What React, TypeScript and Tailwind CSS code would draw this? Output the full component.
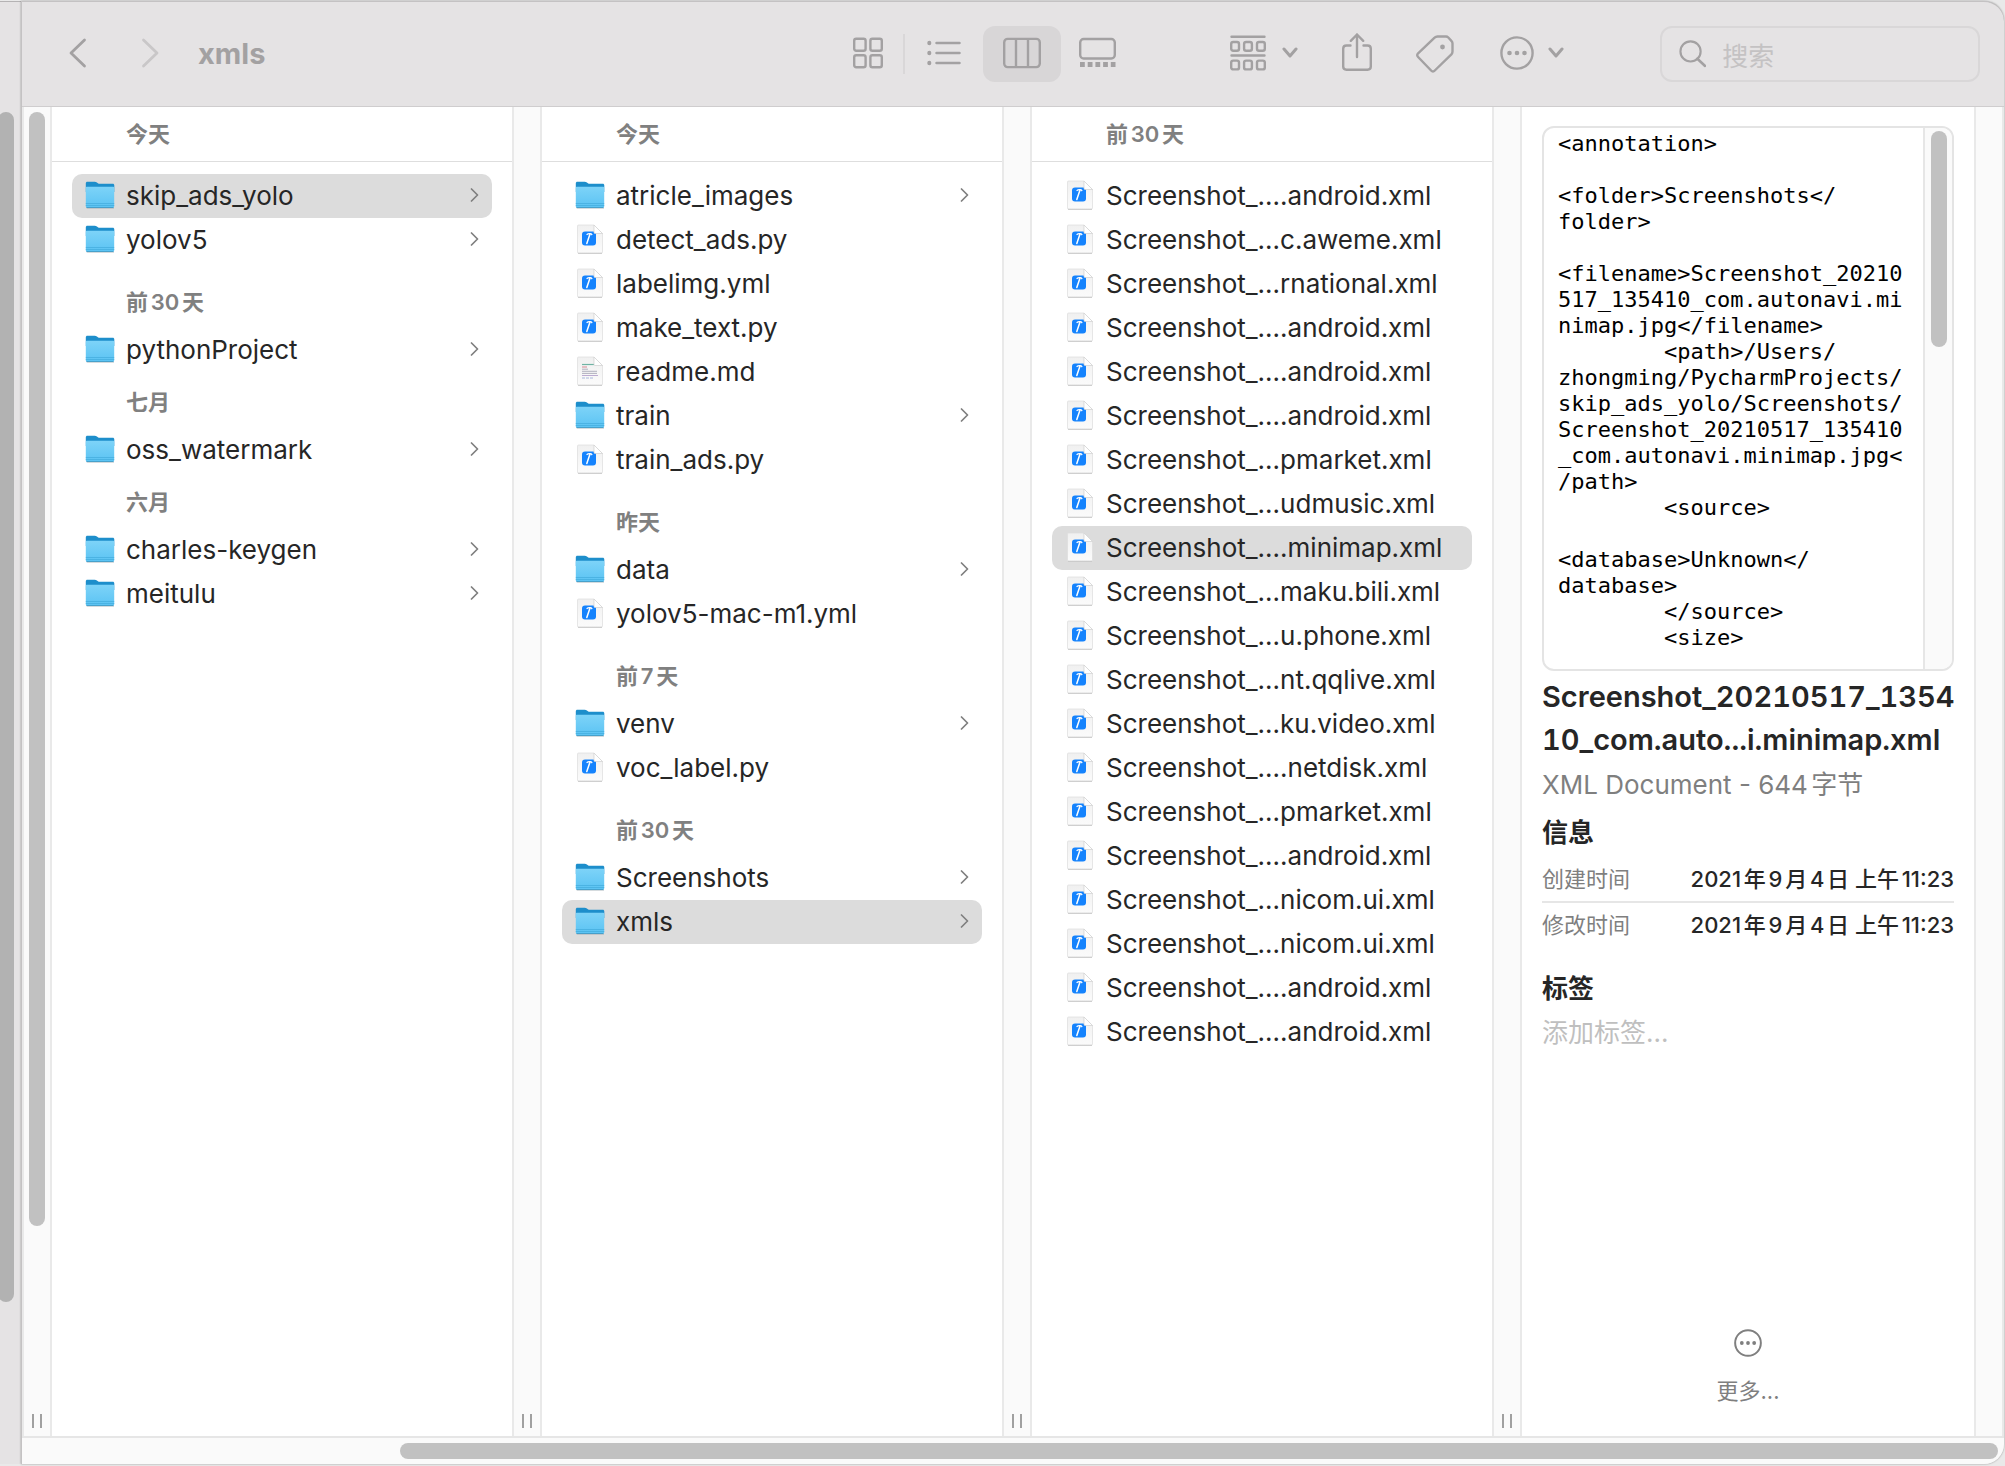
import React, { useState } from "react";

type Kind = "folder" | "code" | "text";

interface Entry {
  name: string;
  kind: Kind;
}

interface Group {
  title: string;
  entries: Entry[];
}

const folder = (name: string): Entry => ({ name, kind: "folder" });
const code = (name: string): Entry => ({ name, kind: "code" });

const PROJECTS: Group[] = [
  { title: "今天", entries: [folder("skip_ads_yolo"), folder("yolov5")] },
  { title: "前30天", entries: [folder("pythonProject")] },
  { title: "七月", entries: [folder("oss_watermark")] },
  { title: "六月", entries: [folder("charles-keygen"), folder("meitulu")] },
];

const FILES: Group[] = [
  {
    title: "今天",
    entries: [
      folder("atricle_images"),
      code("detect_ads.py"),
      code("labelimg.yml"),
      code("make_text.py"),
      { name: "readme.md", kind: "text" },
      folder("train"),
      code("train_ads.py"),
    ],
  },
  { title: "昨天", entries: [folder("data"), code("yolov5-mac-m1.yml")] },
  { title: "前7天", entries: [folder("venv"), code("voc_label.py")] },
  { title: "前30天", entries: [folder("Screenshots"), folder("xmls")] },
];

const XMLS: Group[] = [
  {
    title: "前30天",
    entries: [
      "....android.xml",
      "...c.aweme.xml",
      "...rnational.xml",
      "....android.xml",
      "....android.xml",
      "....android.xml",
      "...pmarket.xml",
      "...udmusic.xml",
      "....minimap.xml",
      "...maku.bili.xml",
      "...u.phone.xml",
      "...nt.qqlive.xml",
      "...ku.video.xml",
      "....netdisk.xml",
      "...pmarket.xml",
      "....android.xml",
      "...nicom.ui.xml",
      "...nicom.ui.xml",
      "....android.xml",
      "....android.xml",
    ].map(end => code("Screenshot_" + end)),
  },
];

const PREVIEW = `<annotation>

<folder>Screenshots</
folder>

<filename>Screenshot_20210
517_135410_com.autonavi.mi
nimap.jpg</filename>
        <path>/Users/
zhongming/PycharmProjects/
skip_ads_yolo/Screenshots/
Screenshot_20210517_135410
_com.autonavi.minimap.jpg<
/path>
        <source>

<database>Unknown</
database>
        </source>
        <size>`;

function FolderIcon() {
  return (
    <svg width="30" height="30" viewBox="0 0 30 30" aria-hidden="true">
      <defs>
        <linearGradient id="folderFront" x1="0" y1="0" x2="0" y2="1">
          <stop offset="0" stopColor="#7dd3f8" />
          <stop offset="1" stopColor="#5bc3f3" />
        </linearGradient>
      </defs>
      <path d="M1 27.500h28v1.200H2z" fill="#9aa7ae" opacity=".55" />
      <path d="M.8 3.400c0-1 .6-1.600 1.600-1.600h7.200c1 0 1.600.2 2.300.8l1 .7c.6.4 1 .5 1.800.5h13c1 0 1.600.6 1.600 1.600V12H.8z" fill="#1d8ecb" />
      <path d="M.8 8.200c0-.9.5-1.400 1.400-1.400h25.600c.9 0 1.400.5 1.400 1.400v18c0 .9-.6 1.500-1.500 1.500H2.300c-.9 0-1.500-.6-1.500-1.500z" fill="url(#folderFront)" />
      <path d="M.8 23.500h28.400M.8 25.500h28.400" stroke="#45aede" strokeWidth=".8" />
      <path d="M1.500 27.500h27" stroke="#3a95c2" strokeWidth=".8" />
    </svg>
  );
}

function PageShape({ children }: { children: React.ReactNode }) {
  return (
    <svg width="30" height="30" viewBox="0 0 30 30" aria-hidden="true">
      <defs>
        <linearGradient id="page" x1="0" y1="0" x2="0" y2="1">
          <stop offset="0" stopColor="#f0f0f0" />
          <stop offset="1" stopColor="#fbfbfb" />
        </linearGradient>
      </defs>
      <path d="M3.500 1h15.500l8.500 8.500V28c0 .8-.6 1.300-1.300 1.300H3.800c-.8 0-1.300-.5-1.300-1.300V2c0-.6.4-1 1-1z" fill="url(#page)" stroke="#dcdcdc" strokeWidth=".7" />
      <path d="M3 29.300h24" stroke="#c4c4c4" strokeWidth=".9" />
      {children}
      <path d="M19 1l8.500 8.500H20c-.6 0-1-.4-1-1z" fill="#fff" stroke="#d0d0d0" strokeWidth=".7" />
    </svg>
  );
}

function CodeIcon() {
  return (
    <PageShape>
      <rect x="7" y="7.500" width="14" height="14" rx="3" fill="#1583fd" />
      <path d="M15 10L11.800 19.500" stroke="#fff" strokeWidth="1.500" strokeLinecap="round" />
      <path d="M11.600 10.800c1.200-1 3-1.300 4.600-.9l1 1.100" stroke="#fff" strokeWidth="1.200" fill="none" />
    </PageShape>
  );
}

function TextIcon() {
  return (
    <PageShape>
      <path d="M7 8.500h12" stroke="#6fb3a4" strokeWidth="1.200" />
      <path d="M7 11h5" stroke="#d9909c" strokeWidth="1.100" />
      <path d="M7 13.200h6M7 15.300h15M7 17.400h15" stroke="#a9a9b8" strokeWidth=".9" />
      <path d="M7 19.500h16" stroke="#b4a3cc" strokeWidth=".9" />
      <path d="M7 22h12" stroke="#9fb0d8" strokeWidth=".9" strokeDasharray="3 1" />
    </PageShape>
  );
}

const ICONS: Record<Kind, React.ReactNode> = {
  folder: <FolderIcon />,
  code: <CodeIcon />,
  text: <TextIcon />,
};

function EllipsisCircle({ size, stroke }: { size: number; stroke: number }) {
  return (
    <svg width={size} height={size} viewBox="0 0 34 34" fill="none" stroke="currentColor" strokeWidth={stroke} aria-hidden="true">
      <circle cx="17" cy="17" r="15.600" />
      <g fill="currentColor" stroke="none">
        <circle cx="9.500" cy="17" r="2.300" />
        <circle cx="17" cy="17" r="2.300" />
        <circle cx="24.500" cy="17" r="2.300" />
      </g>
    </svg>
  );
}

function ChevronDown() {
  return (
    <svg width="16" height="12" viewBox="0 0 16 12" fill="none" stroke="currentColor" strokeWidth="3" strokeLinecap="round" strokeLinejoin="round" aria-hidden="true">
      <path d="M2 2l6 7 6-7" />
    </svg>
  );
}

function Toolbar() {
  const [query, setQuery] = useState("");

  return (
    <header className="flex h-[105px] shrink-0 items-center border-b border-[#cfcdce] pl-10 pr-6 text-[#a3a1a2]">
      <button aria-label="后退" className="flex h-14 w-8 items-center justify-center pb-0.5">
        <svg width="18" height="30" viewBox="0 0 18 30" fill="none" stroke="currentColor" strokeWidth="2.800" strokeLinecap="round" strokeLinejoin="round">
          <path d="M15.500 2L2 15l13.500 13" />
        </svg>
      </button>
      <button aria-label="前进" className="ml-10 flex h-14 w-8 items-center justify-center pb-0.5 text-[#c9c7c8]">
        <svg width="18" height="30" viewBox="0 0 18 30" fill="none" stroke="currentColor" strokeWidth="2.800" strokeLinecap="round" strokeLinejoin="round">
          <path d="M2.500 2L16 15 2.500 28" />
        </svg>
      </button>
      <h1 className="ml-8 pb-0.5 text-[29px] font-bold leading-none">xmls</h1>

      <div className="ml-auto flex items-center">
        <button aria-label="图标" className="flex h-14 w-[70px] items-center justify-center pb-0.5">
          <svg width="30" height="32" viewBox="0 0 30 32" fill="none" stroke="currentColor" strokeWidth="2.400">
            <rect x="1.200" y="1.700" width="11.400" height="12" rx="2" />
            <rect x="17.400" y="1.700" width="11.400" height="12" rx="2" />
            <rect x="1.200" y="18.200" width="11.400" height="12" rx="2" />
            <rect x="17.400" y="18.200" width="11.400" height="12" rx="2" />
          </svg>
        </button>
        <span className="h-10 w-0.5 bg-[#d9d7d8]" />
        <button aria-label="列表" className="flex h-14 w-[78px] items-center justify-center pb-0.5">
          <svg width="34" height="26" viewBox="0 0 34 26" fill="none" stroke="currentColor" strokeWidth="2.500" strokeLinecap="round">
            <path d="M9.500 3h23M9.500 13h23M9.500 23h23" />
            <path d="M2.300 2.800v.4M2.300 12.800v.4M2.300 22.800v.4" strokeWidth="4" />
          </svg>
        </button>
        <button aria-label="分栏" aria-pressed="true" className="flex h-14 w-[78px] items-center justify-center rounded-xl bg-[#d8d6d7] pb-0.5">
          <svg width="38" height="32" viewBox="0 0 38 32" fill="none" stroke="currentColor" strokeWidth="2.400">
            <rect x="1.200" y="1.900" width="35.600" height="28.200" rx="3.500" />
            <path d="M13 2v28M25 2v28" />
          </svg>
        </button>
        <button aria-label="画廊" className="flex h-14 w-[72px] items-center justify-center pb-0.5">
          <svg width="37" height="32" viewBox="0 0 37 32" fill="none" stroke="currentColor" strokeWidth="2.400">
            <rect x="1.200" y="2" width="34.600" height="19.500" rx="3.500" />
            <path d="M1 27.500h35.500" strokeWidth="5" strokeDasharray="4.800 2.900" />
          </svg>
        </button>
      </div>

      <button aria-label="分组" className="ml-[97px] flex h-14 items-center gap-4 pb-0.5">
        <svg width="36" height="36" viewBox="0 0 36 36" fill="none" stroke="currentColor" strokeWidth="2.400" strokeLinecap="round">
          <path d="M1.500 1.800h33M1.500 20.500h33" />
          <rect x="1.200" y="7" width="7.800" height="8.800" rx="2" />
          <rect x="14.100" y="7" width="7.800" height="8.800" rx="2" />
          <rect x="27" y="7" width="7.800" height="8.800" rx="2" />
          <rect x="1.200" y="25.600" width="7.800" height="8.800" rx="2" />
          <rect x="14.100" y="25.600" width="7.800" height="8.800" rx="2" />
          <rect x="27" y="25.600" width="7.800" height="8.800" rx="2" />
        </svg>
        <ChevronDown />
      </button>
      <button aria-label="共享" className="ml-11 flex h-14 items-center pb-1">
        <svg width="30" height="38" viewBox="0 0 30 38" fill="none" stroke="currentColor" strokeWidth="2.400" strokeLinecap="round" strokeLinejoin="round">
          <path d="M8.500 12.500H4.500C2.500 12.500 1.200 13.700 1.200 15.700v17.800c0 2 1.300 3.200 3.300 3.200h21c2 0 3.300-1.200 3.300-3.200V15.700c0-2-1.300-3.200-3.300-3.200h-4" />
          <path d="M15 24V1.500M8.800 7.800L15 1.500l6.200 6.300" />
        </svg>
      </button>
      <button aria-label="标签" className="ml-11 flex h-14 items-center">
        <svg width="38" height="38" viewBox="0 0 38 38" fill="none" stroke="currentColor" strokeWidth="2.400" strokeLinejoin="round">
          <path d="M21.500 1.500h8.500c1 0 1.600.3 2.300 1l3.300 3.600c.7.700.9 1.300.9 2.300v8.200c0 1.100-.3 1.900-1.100 2.800L18.800 35.500c-1.200 1.300-2.500 1.300-3.700 0L2.100 22c-1.200-1.300-1.200-2.400 0-3.700L18.600 2.700c.9-.9 1.700-1.200 2.900-1.200z" />
          <circle cx="26.500" cy="12" r="2.400" fill="currentColor" stroke="none" />
        </svg>
      </button>
      <button aria-label="操作" className="ml-[46px] flex h-14 items-center gap-[14px] pb-0.5">
        <EllipsisCircle size={34} stroke={2.4} />
        <ChevronDown />
      </button>

      <label className="ml-24 flex h-14 w-80 shrink-0 items-center rounded-xl border-2 border-[#d9d7d8] pl-[17px]">
        <svg width="32" height="32" viewBox="0 0 32 32" fill="none" stroke="currentColor" strokeWidth="2.500" strokeLinecap="round" aria-hidden="true">
          <circle cx="13.500" cy="13" r="11.800" />
          <path d="M21.500 21.500L30.500 30" strokeWidth="3" />
        </svg>
        <input
          type="text"
          aria-label="搜索"
          placeholder="搜索"
          value={query}
          onChange={e => setQuery(e.target.value)}
          className="ml-4 mt-1 w-full min-w-0 bg-transparent text-[26px] text-gray-700 outline-none placeholder:text-[#c4c2c3]"
        />
      </label>
    </header>
  );
}

function Gutter({ thumb = false, grip = true }: { thumb?: boolean; grip?: boolean }) {
  return (
    <div className="flex w-[30px] shrink-0 flex-col items-center border-x-2 border-[#e9e9e9] bg-[#fafafa] pb-2 pt-[5px]">
      {thumb && <div className="h-11/13 w-4 rounded-full bg-[#c1c1c1]" />}
      {grip && <div className="mt-auto h-[14px] w-[10px] border-x-2 border-[#a0a0a0]" />}
    </div>
  );
}

interface ColumnProps {
  groups: Group[];
  initial: number;
}

function Column({ groups, initial }: ColumnProps) {
  const [selected, setSelected] = useState(initial);
  let index = -1;

  return (
    <section className="min-w-0 flex-1 bg-white">
      {groups.map((group, g) => (
        <div key={g}>
          <h2
            className={`flex items-center pl-[74px] text-[22px] font-semibold text-[#808080] [text-autospace:normal] ${
              g === 0 ? "mb-3 h-[55px] border-b border-[#dedede]" : "h-[50px] pb-0.5"
            }`}
          >
            <span>{group.title}</span>
          </h2>
          <ul className={`px-5 ${group.entries.length > 1 ? "pb-4" : "pb-1.5"}`}>
            {group.entries.map((entry, i) => {
              index += 1;
              const row = index;
              return (
                <li key={i}>
                  <button
                    onClick={() => setSelected(row)}
                    className={`flex h-11 w-full items-center rounded-[10px] px-[13px] pb-0.5 text-left text-[26px] text-[#262626] ${
                      selected === row ? "bg-[#dcdcdc]" : ""
                    }`}
                  >
                    {ICONS[entry.kind]}
                    <span className="ml-[11px] flex-1 whitespace-nowrap">{entry.name}</span>
                    {entry.kind === "folder" && (
                      <svg width="9" height="14" viewBox="0 0 9 14" fill="none" stroke="#7f7f7f" strokeWidth="1.700" strokeLinecap="round" strokeLinejoin="round" aria-hidden="true">
                        <path d="M1.500 1l6 6-6 6" />
                      </svg>
                    )}
                  </button>
                </li>
              );
            })}
          </ul>
        </div>
      ))}
    </section>
  );
}

function Preview() {
  return (
    <aside className="flex w-[452px] shrink-0 flex-col bg-white px-5 pt-[19px]">
      <div className="flex h-[545px] shrink-0 overflow-hidden rounded-xl border-2 border-[#e4e4e4]">
        <pre className="flex-1 pl-[14px] pt-[3px] font-['DejaVu_Sans_Mono',monospace] text-[22px] leading-[26px] text-black">{PREVIEW}</pre>
        <div className="w-[29px] border-l-2 border-[#e6e6e6] bg-[#fafafa] pl-[6px] pt-[3px]">
          <div className="h-[216px] w-4 rounded-full bg-[#c1c1c1]" />
        </div>
      </div>
      <h2 className="mt-1 whitespace-nowrap text-[29px] font-semibold tabular-nums leading-[43px] text-[#262626]">
        Screenshot_20210517_1354
        <br />
        10_com.auto...i.minimap.xml
      </h2>
      <p className="text-[26px] leading-[48px] text-[#7f7f7f] [text-autospace:normal]">XML Document - 644字节</p>
      <h3 className="text-[26px] font-bold leading-[48px] text-[#262626]">信息</h3>
      <dl className="text-[22px] leading-[44px]">
        <div className="flex justify-between border-b-2 border-[#e6e6e6]">
          <dt className="text-[#7f7f7f]">创建时间</dt>
          <dd className="font-medium text-[#262626] [text-autospace:normal]">2021年9月4日 上午11:23</dd>
        </div>
        <div className="flex justify-between">
          <dt className="text-[#7f7f7f]">修改时间</dt>
          <dd className="font-medium text-[#262626] [text-autospace:normal]">2021年9月4日 上午11:23</dd>
        </div>
      </dl>
      <h3 className="mt-5 text-[26px] font-bold leading-[44px] text-[#262626]">标签</h3>
      <button className="text-left text-[26px] leading-[44px] text-[#bfbfbf]">添加标签...</button>
      <button className="mb-7 mt-auto flex flex-col items-center gap-[18px] self-center text-[22px] text-[#7f7f7f]">
        <EllipsisCircle size={28} stroke={2.4} />
        更多...
      </button>
    </aside>
  );
}

export default function App() {
  return (
    <div className="flex h-screen overflow-hidden bg-[#e9e9e9] pb-0.5 pt-px font-[Inter,'Noto_Sans_CJK_SC',sans-serif]">
      <div className="flex w-[21px] shrink-0 border-t border-[#b5b3b4] bg-[#e5e3e4] pt-[110px]">
        <div className="-ml-0.5 h-[88%] w-4 rounded-full bg-[#b2b2b2]" />
      </div>
      <main className="mr-px flex min-w-0 flex-1 flex-col overflow-hidden rounded-r-[20px] border-l border-t border-[#c4c2c3] bg-[#e5e3e4] shadow-[0_0_2px_rgba(0,0,0,0.4)]">
        <Toolbar />
        <div className="flex min-h-0 flex-1">
          <Gutter thumb />
          <Column groups={PROJECTS} initial={0} />
          <Gutter />
          <Column groups={FILES} initial={12} />
          <Gutter />
          <Column groups={XMLS} initial={8} />
          <Gutter />
          <Preview />
          <Gutter grip={false} />
        </div>
        <div className="flex h-7 shrink-0 items-center border-t-2 border-[#e6e6e6] bg-[#fafafa] pr-[6px]">
          <div className="ml-[378px] h-4 flex-1 rounded-full bg-[#c1c1c1]" />
        </div>
      </main>
    </div>
  );
}
